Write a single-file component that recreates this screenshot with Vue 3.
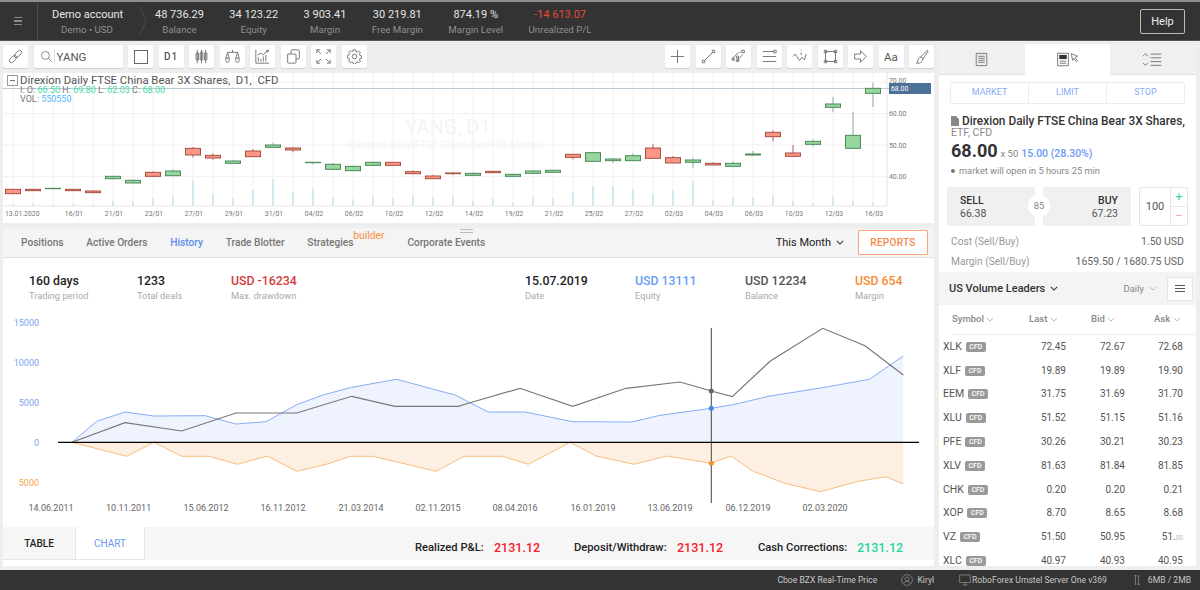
<script setup>
const stats = [
  { value: '48 736.29', label: 'Balance' },
  { value: '34 123.22', label: 'Equity' },
  { value: '3 903.41', label: 'Margin' },
  { value: '30 219.81', label: 'Free Margin' },
  { value: '874.19 %', label: 'Margin Level' },
  { value: '-14 613.07', label: 'Unrealized P/L', loss: true },
];

const icons = {
  link: 'M2.3 12.3l4-4a2.4 2.4 0 0 1 3.4 3.4l-4 4a2.4 2.4 0 0 1-3.4-3.4zM8.3 6.3l4-4a2.4 2.4 0 0 1 3.4 3.4l-4 4a2.4 2.4 0 0 1-3.4-3.4z',
  candles: 'M4 1v16M9 1v16M14 1v16M2.5 5h3v8h-3zM7.5 4h3v9h-3zM12.5 5h3v8h-3z',
  scales: 'M9 1v3M3 4h12M3 4L1 11M3 4l2 7M15 4l-2 7M15 4l2 7M1 11v3a2 2 0 0 0 4 0v-3zM13 11v3a2 2 0 0 0 4 0v-3z',
  bars: 'M1 1v16h16M4 15v-5M7 15v-3M10 15v-6M13 15v-8M3 7l4-2 3 2 5-5M14 1.5h2v2h-2z',
  copy: 'M2 6h9a1 1 0 0 1 1 1v9a1 1 0 0 1-1 1H3a1 1 0 0 1-1-1zM6 6V2a1 1 0 0 1 1-1h8a1 1 0 0 1 1 1v9a1 1 0 0 1-1 1h-3',
  expand: 'M1 5V1h4M1 1l5 5M17 5V1h-4M17 1l-5 5M1 13v4h4M1 17l5-5M17 13v4h-4M17 17l-5-5',
  gear: 'M7.6 1h2.8l.4 2.1 1.5.6 1.8-1.2 2 2-1.2 1.8.6 1.5 2.1.4v2.8l-2.1.4-.6 1.5 1.2 1.8-2 2-1.8-1.2-1.5.6-.4 2.1H7.6l-.4-2.1-1.5-.6-1.8 1.2-2-2 1.2-1.8-.6-1.5-2.1-.4V7.6l2.1-.4.6-1.5-1.2-1.8 2-2 1.8 1.2 1.5-.6zM9 6.3a2.7 2.7 0 1 0 0 5.4 2.7 2.7 0 1 0 0-5.4z',
  cross: 'M9 1v16M1 9h16',
  line: 'M4 14L14 4M1.5 13.5h3v3h-3zM13.5 1.5h3v3h-3z',
  channel: 'M1 12L9 4M6 15l8-8M12 3l-1.5 1.5M1.5 11H4v2.5H1.5zM6.5 8.5H9V11H6.5zM13 1.5h3v3h-3zM7 12.5h2.5V15H7z',
  levels: 'M1 3h13M1 9h16M1 15h16M14 1.5h3v3h-3z',
  wave: 'M1 9l3-3 5 8 3-4 3 3 2-7M11 1v1M11 4v3',
  frame: 'M3 3h12v12H3zM1.5 1.5h3v3h-3zM13.5 1.5h3v3h-3zM1.5 13.5h3v3h-3zM13.5 13.5h3v3h-3z',
  arrow: 'M2 6h7V2l7 7-7 7v-4H2z',
  brush: 'M16 1.5l1 1-6 9-3-2zM8 9.5c-2 .5-3 2-3.5 5L3 17h3.5c2-1 3.5-2 4.5-5.5',
};

const leftTools = ['candles', 'scales', 'bars', 'copy', 'expand', 'gear'];
const rightTools = ['cross', 'line', 'channel', 'levels', 'wave', 'frame', 'arrow', 'aa', 'brush'];

// x = 13 + 20 * index, y values measured from chart top
const candleRows = [
  ['r', 343, 356, 343, 356], ['r', 343, 347, 343, 347], ['g', 340, 341, 340, 341], ['r', 343, 347, 343, 347],
  ['r', 348, 353, 348, 353], ['g', 304, 311, 304, 314], ['g', 316, 324, 313, 324], ['r', 292, 304, 289, 305],
  ['g', 288, 302, 282, 302], ['r', 220, 240, 216, 248], ['r', 241, 249, 235, 255], ['g', 258, 265, 255, 265],
  ['r', 228, 245, 222, 245], ['g', 210, 217, 203, 217], ['r', 219, 225, 216, 232], ['g', 262, 263, 260, 268],
  ['g', 268, 283, 264, 283], ['g', 274, 287, 272, 287], ['g', 262, 271, 259, 271], ['r', 262, 271, 262, 271],
  ['r', 290, 296, 286, 298], ['r', 303, 311, 300, 311], ['r', 294, 296, 292, 299], ['g', 295, 301, 292, 301],
  ['r', 289, 293, 289, 293], ['g', 298, 304, 298, 304], ['g', 288, 295, 285, 295], ['g', 286, 292, 286, 292],
  ['r', 238, 247, 238, 253], ['g', 233, 259, 231, 259], ['g', 252, 257, 249, 264], ['g', 242, 257, 235, 257],
  ['r', 219, 250, 207, 250], ['r', 248, 264, 243, 264], ['g', 255, 262, 248, 278], ['r', 265, 270, 262, 270],
  ['g', 265, 274, 259, 277], ['g', 237, 240, 228, 242], ['r', 172, 185, 166, 199], ['r', 234, 244, 210, 244],
  ['g', 199, 208, 193, 214], ['g', 87, 97, 66, 112], ['g', 181, 220, 111, 220], ['g', 40, 55, 23, 96],
];
const candles = candleRows.map(([tone, top, bottom, wickTop, wickBottom], i) => ({
  tone,
  x: 13 + 20 * i,
  top: 75 + top / 3,
  height: (bottom - top) / 3,
  wickTop: 75 + wickTop / 3,
  wickBottom: 75 + wickBottom / 3,
}));

const volumeTops = [388, 386, 390, 388, 390, 378, 380, 371, 365, 317, 356, 371, 345, 312, 350, 341, 368, 373, 365, 371, 361, 367, 365, 378,
  371, 383, 367, 371, 352, 335, 333, 343, 356, 347, 320, 374, 368, 368, 360, 378, 384, 365, 378, 382];
const volumes = volumeTops.map((top, i) => ({ x: 13 + 20 * i, y: 75 + top / 3 }));

const gridX = candles.map((c) => c.x);
const gridY = [82, 113.5, 145, 176.7];
const priceLabels = [
  { y: 113.5, text: '60.00' },
  { y: 145, text: '50.00' },
  { y: 176.7, text: '40.00' },
];
const dateLabels = ['16/01', '21/01', '23/01', '27/01', '29/01', '31/01', '04/02', '06/02', '10/02', '12/02', '14/02', '19/02',
  '21/02', '25/02', '27/02', '02/03', '04/03', '06/03', '10/03', '12/03', '16/03'];

const tabs = [
  { name: 'Positions' },
  { name: 'Active Orders' },
  { name: 'History', active: true },
  { name: 'Trade Blotter' },
  { name: 'Strategies', badge: 'builder' },
  { name: 'Corporate Events' },
];

const summaryLeft = [
  { value: '160 days', label: 'Trading period', width: 108 },
  { value: '1233', label: 'Total deals', width: 94 },
  { value: 'USD -16234', label: 'Max. drawdown', tone: 'red' },
];
const summaryRight = [
  { value: '15.07.2019', label: 'Date', width: 110 },
  { value: 'USD 13111', label: 'Equity', tone: 'blue', width: 110 },
  { value: 'USD 12234', label: 'Balance', tone: 'grey', width: 110 },
  { value: 'USD 654', label: 'Margin', tone: 'orange', width: 79 },
];

const yTicks = [
  { y: 322, text: '15000' },
  { y: 362, text: '10000' },
  { y: 402, text: '5000' },
  { y: 442, text: '0' },
  { y: 482, text: '5000', loss: true },
];

const blue = '72,442.3 96.7,421.3 125,412 154,416 205,415.7 236,424 266,421.7 296.7,404.7 323,395 351.7,387.3 396.7,379.3 456,395.3 470,402.7 488.3,412 525,412 572.7,421.7 631.7,422 660,415.3 711.3,408.3 733,404.7 770,396 822.7,387.7 869.3,379.3 903.3,356';
const grey = '72,442.3 125,422.7 181.7,431 236,413 296.7,413 351.7,396.3 395,406.3 458.3,406.3 470,402.7 520,388.3 572.7,406.3 626,388.3 680,382 711.3,391 732.3,396.7 770,361.3 822.7,328.3 865,345.7 903.3,375';
const orange = '72,442.3 126.7,456.3 154,442.3 181.7,456.3 209.3,456.3 237.3,464.3 267.3,456 296.7,471.3 325,464.7 350,456.3 373.3,456.3 436,471.3 464,456.3 502.7,456.3 528.3,464.3 570,442.3 596,456 634,464.3 666.7,456 711.3,463.3 731,456 753.3,471.3 785,483.3 820.7,491.7 856.7,481.7 885.7,476.7 903.3,484';

const xLabels = [
  { x: 51, text: '14.06.2011' }, { x: 128.6, text: '10.11.2011' }, { x: 206, text: '15.06.2012' }, { x: 283, text: '16.11.2012' },
  { x: 361, text: '21.03.2014' }, { x: 438, text: '02.11.2015' }, { x: 515, text: '08.04.2016' }, { x: 593, text: '16.01.2019' },
  { x: 670, text: '13.06.2019' }, { x: 748, text: '06.12.2019' }, { x: 825, text: '02.03.2020' },
];

const columns = [
  { name: 'Symbol', cls: 'col-symbol' },
  { name: 'Last', cls: 'col-last' },
  { name: 'Bid', cls: 'col-bid' },
  { name: 'Ask', cls: 'col-ask' },
];
const rows = [
  ['XLK', '72.45', '72.67', '72.68'],
  ['XLF', '19.89', '19.89', '19.90'],
  ['EEM', '31.75', '31.69', '31.70'],
  ['XLU', '51.52', '51.15', '51.16'],
  ['PFE', '30.26', '30.21', '30.23'],
  ['XLV', '81.63', '81.84', '81.85'],
  ['CHK', '0.20', '0.20', '0.21'],
  ['XOP', '8.70', '8.65', '8.68'],
  ['VZ', '51.50', '50.95', '51.', '00'],
  ['XLC', '40.97', '40.93', '40.95'],
];
</script>

<template>
  <div class="app">
    <header class="topbar">
      <div class="burger"><span /><span /><span /></div>
      <div class="account">
        <div class="stat-value">Demo account</div>
        <div class="stat-label">Demo • USD</div>
      </div>
      <svg class="account-chevron" viewBox="0 0 8 30"><path d="M1 1l6 14-6 14" /></svg>
      <div class="stats">
        <div v-for="stat in stats" :key="stat.label" class="stat">
          <div class="stat-value" :class="{ loss: stat.loss }">{{ stat.value }}</div>
          <div class="stat-label">{{ stat.label }}</div>
        </div>
      </div>
      <button class="help">Help</button>
    </header>

    <div class="workspace">
      <main class="left">
        <div class="toolbar">
          <div class="tool-group">
            <div class="tool"><svg class="icon" viewBox="0 0 18 18"><path :d="icons.link" /></svg></div>
            <div class="tool search">
              <svg class="icon search-icon" viewBox="0 0 18 18"><path d="M7.5 2a5.5 5.5 0 1 0 0 11 5.5 5.5 0 1 0 0-11zM11.5 11.5l5 5" /></svg>
              <span class="search-text">YANG</span>
            </div>
            <div class="tool"><span class="square" /></div>
            <div class="tool d1">D1</div>
            <div v-for="name in leftTools" :key="name" class="tool">
              <svg class="icon" viewBox="0 0 18 18"><path :d="icons[name]" /></svg>
            </div>
          </div>
          <div class="tool-group">
            <div v-for="name in rightTools" :key="name" class="tool">
              <span v-if="name === 'aa'" class="aa">Aa</span>
              <svg v-else class="icon" viewBox="0 0 18 18"><path :d="icons[name]" /></svg>
            </div>
          </div>
        </div>

        <section class="chart-card">
          <svg class="price-chart" viewBox="3 73 931 150">
            <line v-for="x in gridX" :key="'gx' + x" :x1="x" :x2="x" y1="73" y2="206" class="grid" />
            <line v-for="y in gridY" :key="'gy' + y" x1="3" x2="887" :y1="y" :y2="y" class="grid" />
            <text x="448" y="134" class="mark-big">YANG, D1</text>
            <text x="445" y="148" class="mark-small">Direxion Daily FTSE China Bear 3X Shares</text>
            <line v-for="v in volumes" :key="'v' + v.x" :x1="v.x" :x2="v.x" :y1="v.y" y2="206" class="volume" />
            <line x1="3" x2="887" y1="206" y2="206" class="axis" />
            <line x1="887" x2="887" y1="73" y2="206" class="axis" />
            <line x1="3" x2="889" y1="88.5" y2="88.5" class="price-line" />
            <g v-for="c in candles" :key="c.x" :class="c.tone === 'g' ? 'up' : 'down'">
              <line :x1="c.x" :x2="c.x" :y1="c.wickTop" :y2="c.wickBottom" class="wick" />
              <rect :x="c.x - 7.5" :y="c.top" width="15" :height="c.height" class="body" />
            </g>
            <text x="889" y="83" class="tick">70.00</text>
            <text v-for="p in priceLabels" :key="p.text" x="889" :y="p.y + 2.5" class="tick">{{ p.text }}</text>
            <rect x="889" y="83" width="42" height="11" class="price-box" />
            <text x="891" y="91" class="price-now">68.00</text>
            <text x="5" y="215.5" class="date">13.01.2020</text>
            <text v-for="(d, i) in dateLabels" :key="d" :x="74 + 40 * i" y="215.5" class="date centered">{{ d }}</text>
          </svg>
          <div class="legend">
            <div class="legend-title"><span class="collapse" />Direxion Daily FTSE China Bear 3X Shares,&nbsp; D1,&nbsp; CFD</div>
            <div class="legend-row">I: O: <b>66.50</b> H: <b>69.80</b> L: <b>62.03</b> C: <b>68.00</b></div>
            <div class="legend-row">VOL: <i>550550</i></div>
          </div>
        </section>

        <section class="history">
          <span class="grip" />
          <nav class="tabs">
            <a v-for="tab in tabs" :key="tab.name" class="tab" :class="{ active: tab.active }">
              {{ tab.name }}<em v-if="tab.badge" class="badge">{{ tab.badge }}</em>
            </a>
            <div class="period">This Month
              <svg class="chev" viewBox="0 0 10 6"><path d="M1 1l4 4 4-4" /></svg>
            </div>
            <button class="reports">REPORTS</button>
          </nav>

          <div class="summary">
            <div class="summary-group">
              <div v-for="s in summaryLeft" :key="s.label" class="summary-item" :style="{ width: s.width ? s.width + 'px' : 'auto' }">
                <div class="summary-value" :class="s.tone">{{ s.value }}</div>
                <div class="summary-label">{{ s.label }}</div>
              </div>
            </div>
            <div class="summary-group">
              <div v-for="s in summaryRight" :key="s.label" class="summary-item" :style="{ width: s.width + 'px' }">
                <div class="summary-value" :class="s.tone">{{ s.value }}</div>
                <div class="summary-label">{{ s.label }}</div>
              </div>
            </div>
          </div>

          <svg class="equity-chart" viewBox="3 312 931 215">
            <text v-for="t in yTicks" :key="t.y" x="39" :y="t.y + 3.5" class="y-tick" :class="{ loss: t.loss }">{{ t.text }}</text>
            <polygon :points="blue + ' 903.3,442.3 72,442.3'" class="fill-blue" />
            <polygon :points="orange + ' 903.3,442.3 72,442.3'" class="fill-orange" />
            <polyline :points="blue" class="line-blue" />
            <polyline :points="orange" class="line-orange" />
            <polyline :points="grey" class="line-grey" />
            <line x1="58" x2="919" y1="442.3" y2="442.3" class="zero" />
            <line x1="711.3" x2="711.3" y1="328" y2="503" class="cursor" />
            <circle cx="711.3" cy="391" r="2.5" class="dot-grey" />
            <circle cx="711.3" cy="408.3" r="2.5" class="dot-blue" />
            <circle cx="711.3" cy="463.3" r="2.5" class="dot-orange" />
            <text v-for="l in xLabels" :key="l.text" :x="l.x" y="511" class="x-tick">{{ l.text }}</text>
          </svg>

          <div class="history-foot">
            <div class="foot-tab">TABLE</div>
            <div class="foot-tab selected">CHART</div>
            <div class="totals">
              <span class="total-name">Realized P&amp;L:</span><span class="total red-num">2131.12</span>
              <span class="total-name second">Deposit/Withdraw:</span><span class="total red-num">2131.12</span>
              <span class="total-name third">Cash Corrections:</span><span class="total green-num">2131.12</span>
            </div>
          </div>
        </section>
      </main>

      <aside class="right">
        <div class="side-tabs">
          <div class="side-tab">
            <svg class="side-icon" viewBox="0 0 16 18"><path d="M1.5 1.5h13v15h-13zM4 5h8M4 7.5h8M4 10h8M4 12.5h8" /></svg>
          </div>
          <div class="side-tab current">
            <svg class="side-icon wide" viewBox="0 0 28 18">
              <path d="M1.5 1.5h13v15h-13zM4 11h8M4 13.5h8" />
              <path class="solid" d="M3.5 3.5h9v5h-9z" />
              <path d="M18 2l7.5 3-3 1.5 3 4-1.5 1-3-4-1.5 2.5z" />
            </svg>
          </div>
          <div class="side-tab">
            <svg class="side-icon wide" viewBox="0 0 28 18"><path d="M2 5l3-3 3 3M2 13l3 3 3-3M11 2.5h13M11 7h13M11 11.5h13M11 16h13" /></svg>
          </div>
        </div>

        <div class="order">
          <div class="order-types"><span>MARKET</span><span>LIMIT</span><span>STOP</span></div>
          <div class="instrument">
            <svg class="doc" viewBox="0 0 8 10"><path d="M0 0h5l3 3v7H0z" /></svg>Direxion Daily FTSE China Bear 3X Shares,
          </div>
          <div class="instrument-kind">ETF, CFD</div>
          <div class="quote"><strong>68.00</strong><span class="mult">x 50</span><span class="change">15.00 (28.30%)</span></div>
          <div class="market-note"><span class="note-dot" />market will open in 5 hours 25 min</div>
          <div class="trade">
            <div class="trade-box"><b>SELL</b><span>66.38</span></div>
            <div class="trade-box buy"><b>BUY</b><span>67.23</span></div>
            <div class="spread">85</div>
            <div class="qty">
              <div class="qty-value">100</div>
              <div class="qty-steps"><span class="plus">+</span><span class="minus">−</span></div>
            </div>
          </div>
          <div class="cost-row"><span>Cost (Sell/Buy)</span><span class="cost-value">1.50 USD</span></div>
          <div class="cost-row"><span>Margin (Sell/Buy)</span><span class="cost-value">1659.50 / 1680.75 USD</span></div>
        </div>

        <div class="list-head">
          <span class="list-title">US Volume Leaders</span>
          <svg class="chev dark" viewBox="0 0 10 6"><path d="M1 1l4 4 4-4" /></svg>
          <span class="list-period">Daily</span>
          <svg class="chev light" viewBox="0 0 10 6"><path d="M1 1l4 4 4-4" /></svg>
          <div class="list-menu"><span /><span /><span /></div>
        </div>

        <div class="quotes">
          <div class="quotes-head">
            <span v-for="col in columns" :key="col.name" :class="col.cls">{{ col.name }}
              <svg class="chev light" viewBox="0 0 10 6"><path d="M1 1l4 4 4-4" /></svg>
            </span>
          </div>
          <div v-for="row in rows" :key="row[0]" class="quote-row">
            <span class="symbol">{{ row[0] }}<em class="cfd">CFD</em></span>
            <span class="num">{{ row[1] }}</span>
            <span class="num">{{ row[2] }}</span>
            <span class="num">{{ row[3] }}<small v-if="row[4]">{{ row[4] }}</small></span>
          </div>
        </div>
      </aside>
    </div>

    <footer class="statusbar">
      <span>Cboe BZX Real-Time Price</span>
      <svg class="status-icon user" viewBox="0 0 12 12"><path d="M6 .6a5.4 5.4 0 1 0 0 10.8A5.4 5.4 0 1 0 6 .6zM6 3a2 2 0 1 0 0 4 2 2 0 1 0 0-4zM2.5 10c.5-2 2-2.5 3.5-2.5s3 .5 3.5 2.5" /></svg>
      <span>Kiryl</span>
      <svg class="status-icon monitor" viewBox="0 0 12 12"><path d="M.6 1h10.8v7.5H.6zM6 8.5V11M3.5 11h5" /></svg>
      <span>RoboForex Umstel Server One v369</span>
      <svg class="status-icon arrows" viewBox="0 0 8 12"><path d="M2.5 11V1M1 2.5L2.5 1 4 2.5M5.5 1v10M4 9.5L5.5 11 7 9.5" /></svg>
      <span>6MB / 2MB</span>
    </footer>
  </div>
</template>

<style scoped>
.app {
  display: flex;
  flex-direction: column;
  width: 1200px;
  height: 590px;
  overflow: hidden;
  background: #eeeeee;
  font-family: Roboto, "Liberation Sans", sans-serif;
  color: #555;
}

.topbar {
  display: flex;
  align-items: center;
  flex: none;
  height: 41px;
  box-sizing: border-box;
  border-top: 2px solid #8d8d8d;
  border-bottom: 1px solid #555;
  background: #333;
}
.burger {
  display: flex;
  flex-direction: column;
  gap: 2px;
  width: 8px;
  margin-left: 14px;
  padding-right: 15px;
}
.burger span {
  height: 1.5px;
  background: #8a8a8a;
}
.account {
  width: 88px;
  padding: 3px 0 3px 14px;
  border-left: 1px solid #4f4f4f;
  text-align: left;
}
.account .stat-label {
  padding-left: 9px;
}
.account-chevron {
  flex: none;
  width: 8px;
  height: 30px;
  margin-left: -1px;
}
.account-chevron path {
  fill: none;
  stroke: #4a4a4a;
}
.stats {
  display: flex;
  gap: 25.4px;
  margin-left: 8px;
}
.stat {
  text-align: center;
}
.stat-value {
  font-size: 11px;
  line-height: 16px;
  color: #e6e6e6;
  white-space: nowrap;
}
.stat-value.loss {
  color: #e64a35;
}
.stat-label {
  font-size: 9.7px;
  line-height: 13px;
  color: #8f8f8f;
  white-space: nowrap;
}
.help {
  width: 45px;
  height: 25px;
  margin: 0 15px 0 auto;
  border: 1px solid #bbb;
  border-radius: 2px;
  background: transparent;
  color: #eee;
  font: 11px Roboto, sans-serif;
}

.workspace {
  display: flex;
  flex: 1;
  min-height: 0;
}
.left {
  display: flex;
  flex-direction: column;
  flex: none;
  box-sizing: border-box;
  width: 939px;
  padding: 0 5px 4px 3px;
}
.toolbar {
  display: flex;
  flex: none;
  justify-content: space-between;
  height: 32px;
  padding-top: 4px;
  box-sizing: border-box;
}
.tool-group {
  display: flex;
  gap: 5.5px;
}
.tool {
  display: flex;
  align-items: center;
  justify-content: center;
  box-sizing: border-box;
  width: 25px;
  height: 23px;
  border-radius: 2px;
  background: #fff;
  box-shadow: 0 1px 1px rgba(0, 0, 0, 0.12);
}
.icon {
  width: 15px;
  height: 15px;
}
.icon path {
  fill: none;
  stroke: #707070;
  stroke-width: 1.1;
}
.search {
  justify-content: flex-start;
  width: 89px;
  padding-left: 6px;
}
.search-icon {
  width: 13px;
  height: 13px;
}
.search-text {
  margin-left: 1px;
  padding-left: 2px;
  border-left: 1px solid #ddd;
  font-size: 11.5px;
  line-height: 16px;
  color: #555;
}
.square {
  width: 12px;
  height: 12px;
  border: 1.5px solid #666;
}
.d1 {
  font-size: 10px;
  font-weight: 500;
  letter-spacing: 1px;
  color: #555;
}
.aa {
  font-size: 11.5px;
  color: #555;
}

.chart-card {
  position: relative;
  flex: none;
  height: 150px;
  background: #fff;
}
.price-chart {
  display: block;
  width: 931px;
  height: 150px;
}
.grid {
  stroke: #f1f1f1;
  stroke-width: 1;
}
.axis {
  stroke: #e4e4e4;
  stroke-width: 1;
}
.volume {
  stroke: #a9d9ee;
  stroke-width: 1;
}
.price-line {
  stroke: #bccbd6;
  stroke-width: 1;
}
.wick {
  stroke-width: 1;
}
.up .wick {
  stroke: #8fae96;
}
.down .wick {
  stroke: #a8685c;
}
.up .body {
  fill: #98d69f;
  stroke: #4d8a5c;
  stroke-width: 1;
}
.down .body {
  fill: #fa9686;
  stroke: #a94f40;
  stroke-width: 1;
}
.tick,
.date {
  font-size: 6.9px;
  fill: #777;
}
.centered {
  text-anchor: middle;
}
.price-box {
  fill: #4d7096;
}
.price-now {
  font-size: 6.9px;
  fill: #fff;
}
.mark-big {
  font-size: 20px;
  text-anchor: middle;
  fill: #f4f4f4;
}
.mark-small {
  font-size: 10.5px;
  text-anchor: middle;
  fill: #f4f4f4;
}
.legend {
  position: absolute;
  top: 2px;
  left: 4px;
  font-size: 9px;
  line-height: 9px;
  color: #777;
}
.legend-title {
  display: flex;
  align-items: center;
  font-size: 11.3px;
  line-height: 11px;
  color: #555;
}
.collapse {
  width: 9px;
  height: 9px;
  margin-right: 2px;
  border: 1px solid #999;
  background: linear-gradient(#777, #777) center / 5px 1px no-repeat;
}
.legend-row {
  margin-left: 13px;
}
.legend-row b {
  font-weight: 400;
  color: #3fd9a5;
}
.legend-row i {
  font-style: normal;
  color: #4db8ff;
}

.history {
  position: relative;
  display: flex;
  flex-direction: column;
  flex: 1;
  min-height: 0;
  margin-top: 5px;
  background: #fff;
}
.grip {
  position: absolute;
  top: 1px;
  left: 457px;
  width: 13px;
  height: 2px;
  border-top: 1px solid #bbb;
  border-bottom: 1px solid #bbb;
}
.tabs {
  display: flex;
  flex: none;
  align-items: center;
  height: 30px;
  box-sizing: border-box;
  padding: 0 6px 0 18px;
  border-bottom: 1px solid #e4e4e4;
  background: #f4f4f4;
}
.tab {
  position: relative;
  margin-right: 22.8px;
  font-size: 10.15px;
  font-weight: 500;
  color: #777;
  white-space: nowrap;
}
.tab.active {
  color: #5b8def;
}
.badge {
  position: absolute;
  top: -8px;
  left: 46px;
  font-size: 10.3px;
  font-style: normal;
  font-weight: 400;
  color: #f7913d;
}
.tab:nth-child(5) {
  margin-right: 54px;
}
.period {
  display: flex;
  align-items: center;
  gap: 5px;
  margin-left: auto;
  font-size: 11px;
  color: #222;
}
.chev {
  width: 8px;
  height: 5px;
  vertical-align: middle;
}
.chev path {
  fill: none;
  stroke: #333;
  stroke-width: 1.3;
}
.chev.light path {
  stroke: #aaa;
  stroke-width: 1;
}
.reports {
  width: 70px;
  height: 25px;
  margin-left: 14px;
  border: 1px solid #f7a878;
  border-radius: 1px;
  background: #fff;
  color: #f5894a;
  font: 500 10px Roboto, sans-serif;
  letter-spacing: 0.3px;
}

.summary {
  display: flex;
  flex: none;
  justify-content: space-between;
  height: 54px;
  box-sizing: border-box;
  padding: 15px 0 0 26px;
}
.summary-group {
  display: flex;
}
.summary-value {
  font-size: 12.3px;
  font-weight: 500;
  line-height: 16px;
  color: #222;
  white-space: nowrap;
}
.summary-value.red {
  color: #d43a3a;
}
.summary-value.blue {
  color: #659df5;
}
.summary-value.grey {
  color: #555;
}
.summary-value.orange {
  color: #f58a32;
}
.summary-label {
  font-size: 9.3px;
  line-height: 14px;
  color: #aaa;
}

.equity-chart {
  display: block;
  flex: none;
  width: 931px;
  height: 215px;
}
.y-tick {
  font-size: 9px;
  text-anchor: end;
  fill: #7ba2f0;
}
.y-tick.loss {
  fill: #f7a14f;
}
.x-tick {
  font-size: 9px;
  text-anchor: middle;
  fill: #666;
}
.fill-blue {
  fill: #eef3fd;
}
.fill-orange {
  fill: #fdf0e3;
}
.line-blue,
.line-orange,
.line-grey {
  fill: none;
  stroke-width: 1;
}
.line-blue {
  stroke: #86acf5;
}
.line-orange {
  stroke: #f8bd7c;
}
.line-grey {
  stroke: #777;
  stroke-width: 1.2;
}
.zero {
  stroke: #000;
  stroke-width: 1.3;
}
.cursor {
  stroke: #444;
  stroke-width: 1;
}
.dot-grey {
  fill: #666;
}
.dot-blue {
  fill: #4a80ee;
}
.dot-orange {
  fill: #f0932b;
}

.history-foot {
  display: flex;
  flex: none;
  height: 33px;
  background: #f6f6f6;
}
.foot-tab {
  width: 72px;
  font-size: 10px;
  font-weight: 500;
  line-height: 34px;
  text-align: center;
  color: #222;
  box-sizing: border-box;
  border-bottom: 1px solid #e6e6e6;
}
.foot-tab.selected {
  width: 70px;
  border-right: 1px solid #e6e6e6;
  border-left: 1px solid #e6e6e6;
  background: #fff;
  color: #6d97f5;
  font-weight: 400;
}
.totals {
  display: flex;
  align-items: center;
  margin-left: 270px;
  padding-top: 7px;
  height: 27px;
  white-space: nowrap;
}
.total-name {
  width: 79px;
  font-size: 11.2px;
  font-weight: 500;
  color: #222;
}
.total-name.second {
  width: 103px;
  margin-left: 34px;
}
.total-name.third {
  width: 99px;
  margin-left: 35px;
}
.total {
  width: 46px;
  font-size: 12.5px;
  font-weight: 500;
}
.red-num {
  color: #f5202a;
}
.green-num {
  color: #1fd69a;
}

.right {
  display: flex;
  flex-direction: column;
  flex: none;
  width: 257px;
  margin-top: 3px;
  margin-bottom: 4px;
  background: #fff;
}
.side-tabs {
  display: flex;
  flex: none;
  height: 31px;
}
.side-tab {
  display: flex;
  flex: 1;
  align-items: center;
  justify-content: center;
  box-sizing: border-box;
  border-bottom: 1px solid #e2e2e2;
  background: #f0f0f0;
}
.side-tab.current {
  border-bottom: 0;
  background: #fff;
}
.side-icon {
  width: 13px;
  height: 15px;
}
.side-icon.wide {
  width: 24px;
}
.side-icon path {
  fill: none;
  stroke: #666;
  stroke-width: 1;
}
.side-icon path.solid {
  fill: #333;
  stroke: none;
}

.order {
  flex: none;
  height: 197px;
  box-sizing: border-box;
  padding: 7px 12px 0;
}
.order-types {
  display: flex;
  height: 20px;
  margin: 0 -1px;
  border: 1px solid #ececec;
  border-radius: 2px;
}
.order-types span {
  flex: 1;
  font-size: 9px;
  line-height: 18px;
  text-align: center;
  color: #8aaaf5;
}
.order-types span + span {
  border-left: 1px solid #ececec;
}
.instrument {
  display: flex;
  align-items: center;
  margin-top: 10px;
  font-size: 11.85px;
  font-weight: 500;
  line-height: 14px;
  color: #333;
  white-space: nowrap;
}
.doc {
  flex: none;
  width: 8px;
  height: 10px;
  margin-right: 3px;
}
.doc path {
  fill: #888;
}
.instrument-kind {
  font-size: 10.5px;
  line-height: 10px;
  color: #888;
}
.quote {
  display: flex;
  align-items: baseline;
  margin-top: 1px;
  line-height: 24px;
}
.quote strong {
  font-size: 18px;
  font-weight: 700;
  color: #333;
}
.mult {
  margin-left: 3px;
  font-size: 9.5px;
  color: #888;
}
.change {
  margin-left: 3px;
  font-size: 10.5px;
  font-weight: 500;
  color: #6d97f5;
}
.market-note {
  display: flex;
  align-items: center;
  margin-top: -2px;
  font-size: 9.25px;
  line-height: 14px;
  color: #888;
}
.note-dot {
  width: 4px;
  height: 4px;
  margin-right: 4px;
  border-radius: 50%;
  background: #777;
}
.trade {
  position: relative;
  display: flex;
  height: 39px;
  margin: 9px -4px 0;
}
.trade-box {
  display: flex;
  flex: none;
  flex-direction: column;
  justify-content: center;
  box-sizing: border-box;
  width: 88px;
  margin-right: 8px;
  padding: 0 13px;
  background: #f0f0f0;
  font-size: 10.5px;
  line-height: 13px;
  color: #555;
}
.trade-box b {
  font-weight: 500;
  color: #333;
}
.trade-box.buy {
  align-items: flex-end;
}
.spread {
  position: absolute;
  top: 8px;
  left: 81px;
  width: 22px;
  height: 22px;
  border-radius: 50%;
  background: #fff;
  font-size: 9.5px;
  line-height: 22px;
  text-align: center;
  color: #888;
}
.qty {
  display: flex;
  flex: none;
  box-sizing: border-box;
  width: 49px;
  border: 1px solid #e6e6e6;
  border-radius: 2px;
}
.qty-value {
  flex: 1;
  font-size: 11px;
  line-height: 37px;
  text-align: center;
  color: #555;
}
.qty-steps {
  display: flex;
  flex-direction: column;
  width: 16px;
  border-left: 1px solid #e6e6e6;
}
.qty-steps span {
  flex: 1;
  font-size: 13px;
  line-height: 18px;
  text-align: center;
}
.plus {
  border-bottom: 1px solid #e6e6e6;
  color: #3fd9a5;
}
.minus {
  color: #f5a8a8;
}
.cost-row {
  display: flex;
  justify-content: space-between;
  height: 20px;
  font-size: 10.2px;
  line-height: 20px;
  color: #999;
}
.trade + .cost-row {
  margin-top: 6px;
}
.cost-value {
  font-size: 10.5px;
  color: #666;
}

.list-head {
  display: flex;
  flex: none;
  align-items: center;
  height: 33px;
  box-sizing: border-box;
  padding: 0 3px 0 10px;
  background: #f4f4f4;
}
.list-title {
  font-size: 11px;
  font-weight: 500;
  color: #333;
}
.chev.dark {
  margin-left: 5px;
}
.list-period {
  margin-left: auto;
  margin-right: 5px;
  font-size: 9.5px;
  color: #888;
}
.list-menu {
  display: flex;
  flex-direction: column;
  justify-content: center;
  gap: 2px;
  box-sizing: border-box;
  width: 26px;
  height: 24px;
  margin-left: 10px;
  padding: 0 7px;
  background: #fff;
  border: 1px solid #e6e6e6;
}
.list-menu span {
  height: 1px;
  background: #555;
}

.quotes {
  flex: 1;
  min-height: 0;
  overflow: hidden;
}
.quotes-head {
  position: relative;
  height: 29px;
  margin-left: 13px;
  border-bottom: 1px solid #eee;
  font-size: 9.5px;
  font-weight: 500;
  color: #888;
}
.quotes-head span {
  position: absolute;
  top: 8px;
  white-space: nowrap;
}
.col-symbol {
  left: 0;
}
.col-last {
  left: 77px;
}
.col-bid {
  left: 139px;
}
.col-ask {
  left: 202px;
}
.quote-row {
  display: grid;
  grid-template-columns: 68px 59px 59px 58px;
  align-items: center;
  height: 23.8px;
  padding-right: 13px;
  font-size: 10px;
  line-height: 12px;
  color: #555;
}
.quote-row:last-child {
  box-sizing: border-box;
  height: 18px;
  padding-top: 6px;
}
.symbol {
  display: flex;
  align-items: center;
  padding-left: 4px;
  font-size: 10.5px;
}
.cfd {
  margin-left: 4px;
  padding: 0 3.5px;
  border-radius: 2px;
  background: #999;
  font-size: 7px;
  font-style: normal;
  font-weight: 500;
  line-height: 10px;
  color: #fff;
}
.num {
  text-align: right;
}
.num small {
  font-size: 6.5px;
  color: #bbb;
}

.statusbar {
  display: flex;
  flex: none;
  align-items: center;
  justify-content: flex-end;
  height: 20px;
  padding-right: 9px;
  background: #333;
  font-size: 8.6px;
  color: #c8c8c8;
  white-space: nowrap;
}
.status-icon {
  flex: none;
  height: 12px;
}
.status-icon path {
  fill: none;
  stroke: #8a8a8a;
  stroke-width: 0.8;
}
.user {
  width: 12px;
  margin: 0 4px 0 24px;
}
.monitor {
  width: 12px;
  margin: 0 1px 0 25px;
}
.arrows {
  width: 8px;
  margin: 0 7px 0 26px;
}
</style>

<style>
html,
body {
  margin: 0;
  overflow: hidden;
}
</style>
